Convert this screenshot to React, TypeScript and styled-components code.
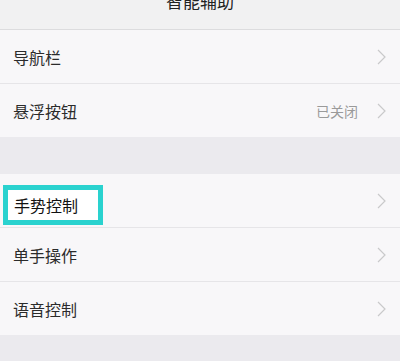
import React from "react";
import styled, { createGlobalStyle } from "styled-components";

const GlobalStyle = createGlobalStyle`
  html, body {
    margin: 0;
    padding: 0;
    background: #ebeaee;
  }
  body {
    font-family: "Noto Sans CJK SC", "Noto Sans", sans-serif;
  }
`;

type Item = {
  label: string;
  value?: string;
  highlighted?: boolean;
};

const groups: Item[][] = [
  [{ label: "导航栏" }, { label: "悬浮按钮", value: "已关闭" }],
  [
    { label: "手势控制", highlighted: true },
    { label: "单手操作" },
    { label: "语音控制" },
  ],
];

function Chevron() {
  return (
    <svg width="9" height="16" viewBox="0 0 9 16">
      <polyline
        points="1,1 8,8 1,15"
        fill="none"
        stroke="#c9c9cb"
        strokeWidth="1.2"
      />
    </svg>
  );
}

function App() {
  return (
    <>
      <GlobalStyle />
      <Page>
        <Header>
          <Title>智能辅助</Title>
        </Header>

        {groups.map((group, gi) => (
          <Group key={gi} first={gi === 0}>
            {group.map((item) => (
              <Row key={item.label}>
                <Label highlighted={item.highlighted}>{item.label}</Label>
                <Right>
                  {item.value && <Value>{item.value}</Value>}
                  <Chevron />
                </Right>
              </Row>
            ))}
          </Group>
        ))}
      </Page>
    </>
  );
}

const Page = styled.div`
  width: 400px;
  height: 361px;
  overflow: hidden;
  background: #ebeaee;
`;

const Header = styled.div`
  height: 29px;
  background: #f1f1f2;
  border-bottom: 1px solid #dcdcde;
  display: flex;
  justify-content: center;
  align-items: flex-start;
  overflow: hidden;
`;

const Title = styled.div`
  margin-top: -11px;
  font-size: 17px;
  line-height: 24px;
  color: #222;
`;

const Group = styled.div<{ first?: boolean }>`
  margin-top: ${(p) => (p.first ? "0" : "37px")};
  background: #f8f7f9;
`;

const Row = styled.div`
  height: 53px;
  display: flex;
  align-items: center;
  justify-content: space-between;
  padding: 0 14px 0 13px;
  border-bottom: 1px solid #e6e5e8;

  &:last-child {
    border-bottom: none;
  }
`;

const Label = styled.div<{ highlighted?: boolean }>`
  font-size: 16px;
  line-height: 22px;
  color: ${(p) => (p.highlighted ? "#111" : "#2b2b2b")};
  ${(p) =>
    p.highlighted &&
    `
    margin-left: -10px;
    margin-top: 9px;
    height: 30px;
    display: flex;
    align-items: center;
    padding: 0 20px 0 6px;
    background: #ffffff;
    border: 5px solid #2ad2cf;
  `}
`;

const Right = styled.div`
  display: flex;
  align-items: center;
  gap: 19px;
`;

const Value = styled.span`
  font-size: 14px;
  color: #9a9a9a;
`;

export default App;
